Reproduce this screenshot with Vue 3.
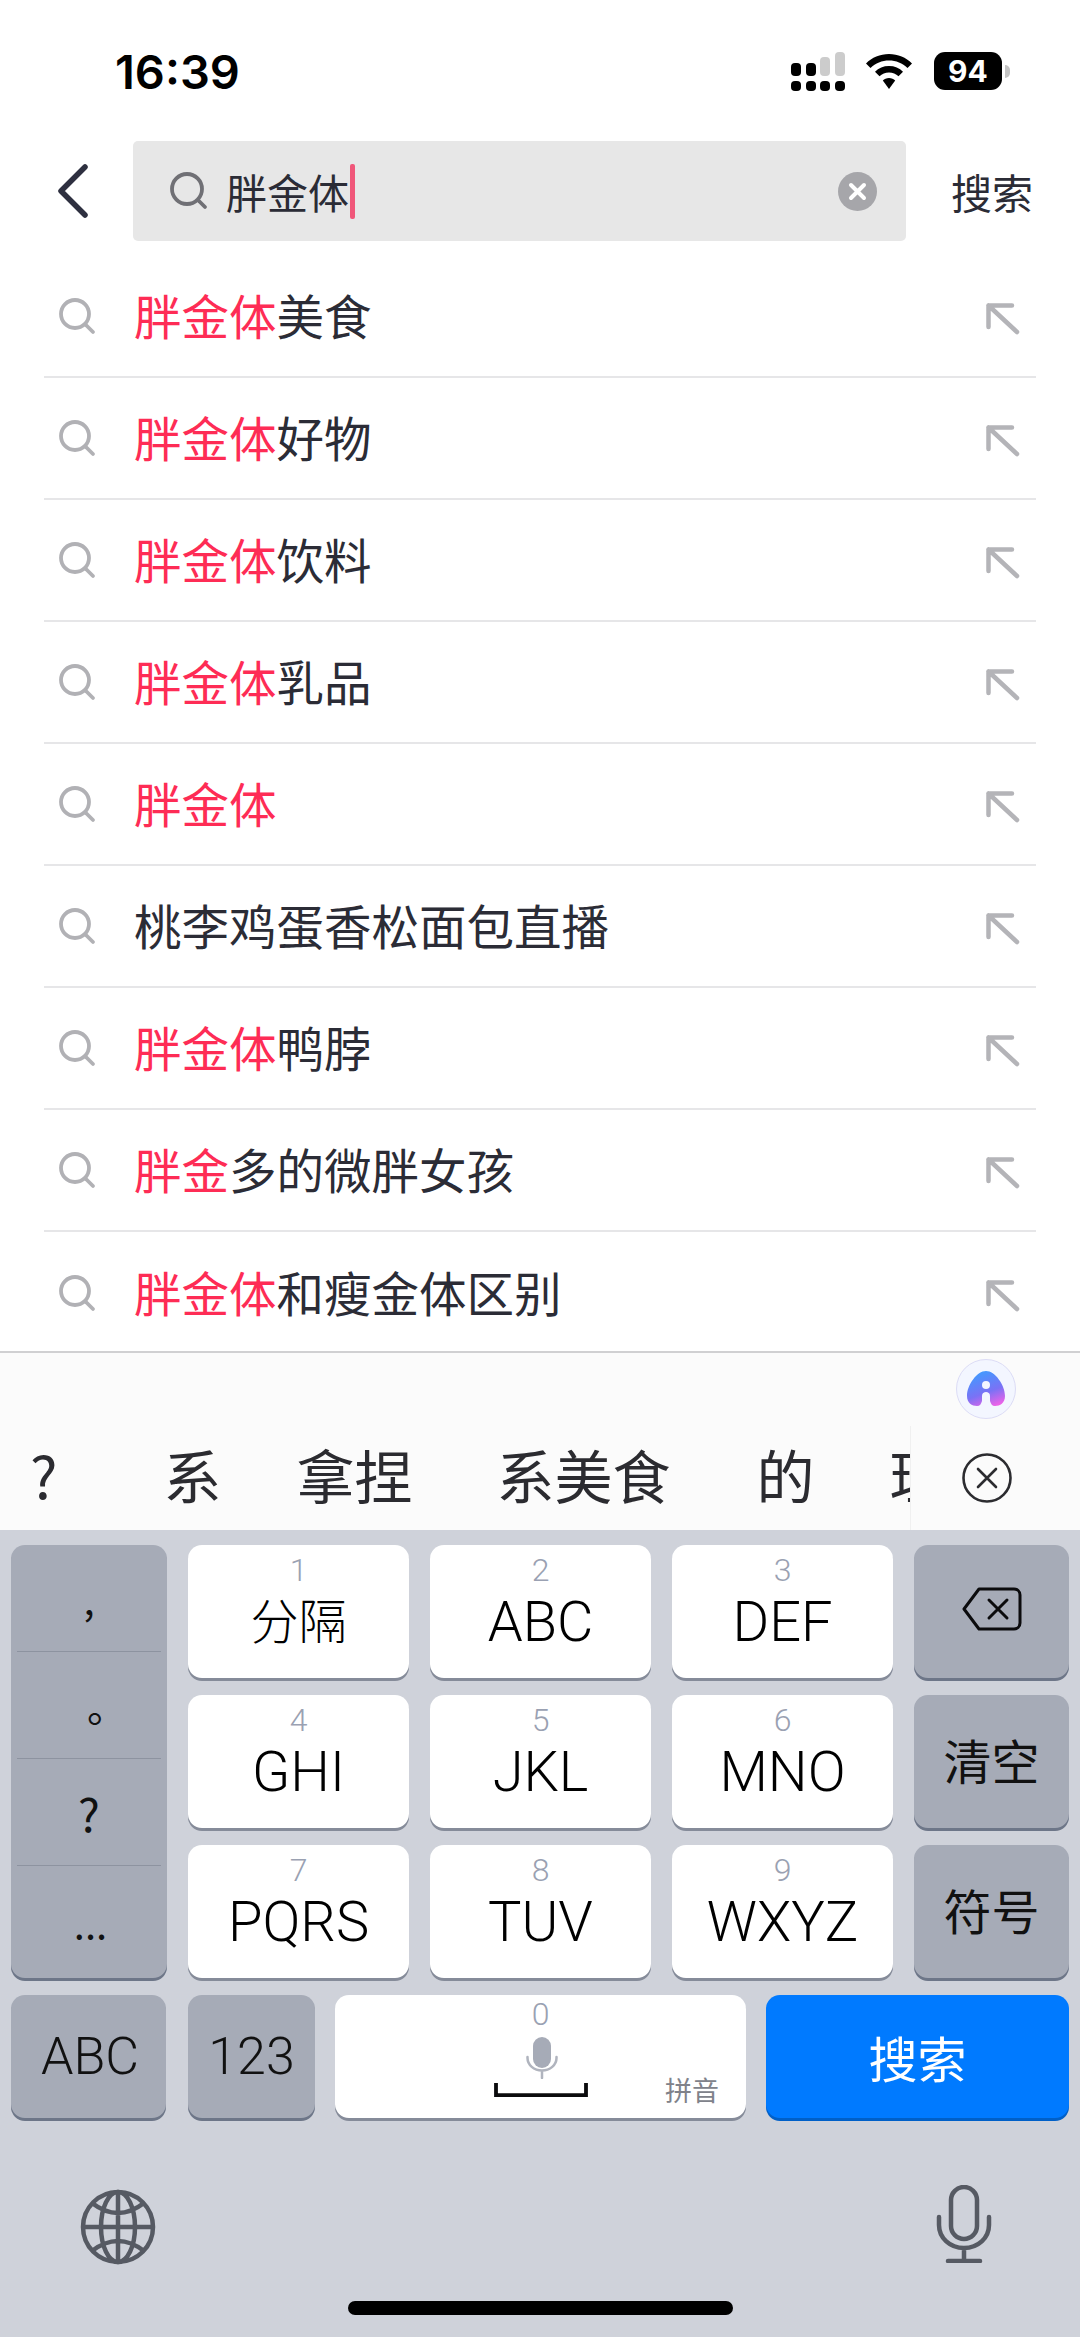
<script setup>
const rows = [
  ['胖金体', '美食'], ['胖金体', '好物'], ['胖金体', '饮料'], ['胖金体', '乳品'], ['胖金体', ''],
  ['', '桃李鸡蛋香松面包直播'], ['胖金体', '鸭脖'], ['胖金', '多的微胖女孩'], ['胖金体', '和瘦金体区别'],
]
const keys = [
  ['1', '分隔'], ['2', 'ABC'], ['3', 'DEF'], ['4', 'GHI'], ['5', 'JKL'], ['6', 'MNO'], ['7', 'PQRS'], ['8', 'TUV'], ['9', 'WXYZ'],
]
const candidates = ['?', '系', '拿捏', '系美食', '的', '理']
</script>

<template>
  <div class="phone">
    <header class="status">
      <span class="time">16:39</span>
      <div class="status-icons">
        <svg class="signal" width="54" height="40" viewBox="0 0 54 40">
          <rect x="0" y="11" width="10" height="13" rx="4" fill="#000" />
          <rect x="15" y="11" width="10" height="13" rx="4" fill="#000" />
          <rect x="29" y="5" width="10" height="19" rx="4" fill="#ccc" />
          <rect x="44" y="0" width="10" height="24" rx="4" fill="#ccc" />
          <rect x="0" y="29" width="10" height="10" rx="4" fill="#000" />
          <rect x="15" y="29" width="10" height="10" rx="4" fill="#000" />
          <rect x="29" y="29" width="10" height="10" rx="4" fill="#000" />
          <rect x="44" y="29" width="10" height="10" rx="4" fill="#000" />
        </svg>
        <svg class="wifi" width="46" height="36" viewBox="0 0 46 36">
          <path d="M23 0C14 0 6 3.500 0 9.500L4.500 14C9.500 9 16 6.500 23 6.500S36.500 9 41.500 14L46 9.500C40 3.500 32 0 23 0Z" fill="#000" />
          <path d="M23 12C17.500 12 12.500 14 9 17.800L13.500 22.300C16 19.800 19.300 18.400 23 18.400S30 19.800 32.500 22.300L37 17.800C33.500 14 28.500 12 23 12Z" fill="#000" />
          <path d="M23 24C20.500 24 18.300 25 16.800 26.600L23 35L29.200 26.600C27.700 25 25.500 24 23 24Z" fill="#000" />
        </svg>
        <div class="battery"><span class="level">94</span><i class="nub"></i></div>
      </div>
    </header>

    <div class="search-row">
      <svg class="back" width="30" height="54" viewBox="0 0 30 54">
        <path d="M27 3L3 27L27 51" fill="none" stroke="#2e3040" stroke-width="5.500" stroke-linecap="round" stroke-linejoin="round" />
      </svg>
      <div class="search-box">
        <svg class="box-icon" width="38" height="38" viewBox="0 0 38 38">
          <circle cx="17" cy="17" r="15" fill="none" stroke="#707075" stroke-width="3.800" />
          <path d="M29 29L35 35" stroke="#707075" stroke-width="3.800" stroke-linecap="round" />
        </svg>
        <span class="query">胖金体</span><i class="caret"></i>
        <svg class="clear" width="39" height="39" viewBox="0 0 39 39">
          <circle cx="19.500" cy="19.500" r="19.500" fill="#a6a6aa" />
          <path d="M13 13L26 26M26 13L13 26" stroke="#fff" stroke-width="4" stroke-linecap="round" />
        </svg>
      </div>
      <span class="search-action">搜索</span>
    </div>

    <ul class="list">
      <li v-for="(r, i) in rows" :key="i" class="row">
        <svg class="row-icon" width="37" height="37" viewBox="0 0 37 37">
          <circle cx="16" cy="16" r="14" fill="none" stroke="#b1b1b5" stroke-width="3.800" />
          <path d="M27 27L34 34" stroke="#b1b1b5" stroke-width="3.800" stroke-linecap="round" />
        </svg>
        <span class="row-text"><em>{{ r[0] }}</em>{{ r[1] }}</span>
        <svg class="row-arrow" width="36" height="36" viewBox="0 0 36 36">
          <path d="M3.500 3.500H27M3.500 3.500V25M3.500 3.500L32 30" fill="none" stroke="#b4b4b8" stroke-width="4.500" stroke-linecap="round" stroke-linejoin="round" />
        </svg>
      </li>
    </ul>

    <section class="candidates">
      <div class="ai-line">
        <div class="ai-badge">
          <svg width="38" height="36" viewBox="0 0 38 36">
            <defs>
              <linearGradient id="aiGrad" x1="0.300" y1="0" x2="0.700" y2="1">
                <stop offset="0" stop-color="#3f9cff" />
                <stop offset="0.600" stop-color="#7a72f5" />
                <stop offset="1" stop-color="#ea62e8" />
              </linearGradient>
            </defs>
            <path d="M19 0C28 0 38 14 38 25C38 32 33 35 28 35C25 35 24 33 23 30V25C23 22 21 21 19 21S15 22 15 25V30C14 33 13 35 10 35C5 35 0 32 0 25C0 14 10 0 19 0Z" fill="url(#aiGrad)" />
            <circle cx="19" cy="14" r="4" fill="#f3f6ff" />
          </svg>
        </div>
      </div>
      <div class="cand-line">
        <div class="cand-words">
          <span v-for="c in candidates" :key="c" class="cand">{{ c }}</span>
        </div>
        <div class="cand-close">
          <svg width="50" height="50" viewBox="0 0 50 50">
            <circle cx="25" cy="25" r="23.500" fill="none" stroke="#2c2c30" stroke-width="2.600" />
            <path d="M16 16L34 34M34 16L16 34" stroke="#2c2c30" stroke-width="2.600" stroke-linecap="round" />
          </svg>
        </div>
      </div>
    </section>

    <section class="keyboard">
      <div class="keygrid">
        <div class="key dark punct">
          <span class="p p1">,</span>
          <span class="p p2">。</span>
          <span class="p p3">?</span>
          <span class="p p4">...</span>
        </div>
        <div v-for="k in keys" :key="k[0]" class="key light" :class="'k' + k[0]">
          <span class="digit">{{ k[0] }}</span>
          <span class="label">{{ k[1] }}</span>
        </div>
        <div class="key dark del">
          <svg width="60" height="44" viewBox="0 0 60 44">
            <path d="M17 2H52C55 2 58 4 58 8V36C58 40 55 42 52 42H17L2 22Z" fill="none" stroke="#0b0b0d" stroke-width="3" stroke-linejoin="round" />
            <path d="M27 13L45 31M45 13L27 31" stroke="#0b0b0d" stroke-width="3" stroke-linecap="round" />
          </svg>
        </div>
        <div class="key dark side clear-key">清空</div>
        <div class="key dark side sym-key">符号</div>
      </div>
      <div class="bottom-row">
        <div class="key dark abc">ABC</div>
        <div class="key dark num">123</div>
        <div class="key light space">
          <span class="digit zero">0</span>
          <svg class="space-mic" width="32" height="42" viewBox="0 0 32 42">
            <rect x="7" y="0" width="18" height="31" rx="9" fill="#a6abb7" />
            <path d="M1.500 20V21C1.500 28 8 33.500 16 33.500S30.500 28 30.500 21V20M16 33.500V41" fill="none" stroke="#b0b4be" stroke-width="2.500" stroke-linecap="round" />
          </svg>
          <svg class="space-bar" width="94" height="14" viewBox="0 0 94 14">
            <path d="M2 0V12.200H92V0" fill="none" stroke="#0b0b0d" stroke-width="3.800" />
          </svg>
          <span class="pinyin">拼音</span>
        </div>
        <div class="key go">搜索</div>
      </div>
      <div class="tools">
        <svg width="76" height="76" viewBox="0 0 76 76" fill="none" stroke="#565a63" stroke-width="4.500">
          <circle cx="38" cy="38" r="35" />
          <ellipse cx="38" cy="38" rx="17" ry="35" />
          <path d="M38 3V73M3 38H73M12 14Q38 34 64 14M12 62Q38 42 64 62" />
        </svg>
        <svg class="tool-mic" width="56" height="78" viewBox="0 0 56 78" fill="none" stroke="#565a63" stroke-width="4.500" stroke-linecap="round">
          <rect x="15" y="2" width="26" height="52" rx="13" />
          <path d="M3 32V40C3 53 14 63 28 63S53 53 53 40V32M28 63V76M12 76H44" />
        </svg>
      </div>
      <div class="home-wrap"><i class="home"></i></div>
    </section>
  </div>
</template>

<style scoped>
.phone {
  width: 1080px;
  height: 2337px;
  background: #fff;
  overflow: hidden;
  display: flex;
  flex-direction: column;
  font-family: "Noto Sans CJK SC", "Noto Sans", sans-serif;
  color: #2b2c36;
}
.status {
  height: 141px;
  padding: 0 78px 0 115px;
  box-sizing: border-box;
  display: flex;
  justify-content: space-between;
  align-items: flex-start;
}
.time {
  font-family: Inter, "Liberation Sans", sans-serif;
  font-weight: 600;
  font-size: 47px;
  line-height: 52px;
  margin-top: 46px;
  color: #000;
}
.status-icons {
  display: flex;
  align-items: flex-start;
  margin-top: 52px;
}
.wifi { margin-left: 21px; margin-top: 2px; }
.battery {
  margin-left: 22px;
  width: 68px;
  height: 38px;
  background: #000;
  border-radius: 11px;
  position: relative;
  display: flex;
  align-items: center;
  justify-content: center;
}
.level {
  font-family: Inter, "Liberation Sans", sans-serif;
  font-weight: 700;
  font-size: 30px;
  line-height: 38px;
  color: #fff;
}
.nub {
  position: absolute;
  right: -8px;
  top: 13px;
  width: 5px;
  height: 13px;
  background: #c4c4c4;
  border-radius: 0 6px 6px 0;
}
.search-row {
  height: 100px;
  display: flex;
  align-items: center;
  padding-left: 58px;
}
.back { flex: none; margin-right: 45px; }
.search-box {
  width: 773px;
  height: 100px;
  background: #e7e7e7;
  border-radius: 5px;
  display: flex;
  align-items: center;
  box-sizing: border-box;
  padding: 0 29px 0 37px;
}
.box-icon { margin-right: 18px; flex: none; }
.query { font-size: 41px; line-height: 56px; }
.caret {
  width: 5px;
  height: 55px;
  margin-left: 1px;
  background: #f0577a;
  border-radius: 2px;
}
.clear { margin-left: auto; }
.search-action {
  margin-left: 45px;
  font-size: 41px;
  line-height: 56px;
}
.list {
  list-style: none;
  margin: 15px 0 0;
  padding: 0 44px;
  height: 1095px;
}
.row {
  height: 122px;
  box-sizing: border-box;
  border-bottom: 2px solid #e6e6e8;
  display: flex;
  align-items: center;
}
.row:last-child { border-bottom: 0; }
.row-icon { margin-left: 15px; flex: none; }
.row-text {
  margin: 0 0 2px 38px;
  font-size: 47.500px;
  line-height: 64px;
}
.row-text em { font-style: normal; color: #fe2c55; }
.row-arrow { margin-left: auto; margin-right: 15px; margin-top: 8px; flex: none; }
.candidates {
  height: 179px;
  background: #fbfbfb;
  border-top: 2px solid #d0d0d2;
  box-sizing: border-box;
}
.ai-line {
  height: 73px;
  display: flex;
  justify-content: flex-end;
  padding: 6px 64px 0 0;
  box-sizing: border-box;
}
.ai-badge {
  width: 60px;
  height: 60px;
  box-sizing: border-box;
  border-radius: 50%;
  background: #f3f6ff;
  border: 1.500px solid #dcdcf6;
  display: flex;
  align-items: center;
  justify-content: center;
}
.cand-line { display: flex; height: 104px; }
.cand-words {
  width: 911px;
  flex: none;
  overflow: hidden;
  display: flex;
  align-items: center;
  padding: 0 0 8px 30px;
  box-sizing: border-box;
  border-right: 1px solid #f0f0f0;
  white-space: nowrap;
  font-size: 58px;
  color: #2b2b30;
}
.cand { flex: none; }
.cand:nth-child(2) { margin-left: 106px; }
.cand:nth-child(3) { margin-left: 75px; }
.cand:nth-child(4) { margin-left: 84px; }
.cand:nth-child(5) { margin-left: 86px; }
.cand:nth-child(6) { margin-left: 75px; }
.cand-close {
  flex: 1;
  display: flex;
  align-items: center;
  justify-content: center;
  padding-right: 18px;
}
.keyboard {
  flex: 1;
  background: #cfd2da;
  padding: 15px 11px 0;
  display: flex;
  flex-direction: column;
}
.keygrid {
  display: grid;
  grid-template-columns: 156px 221px 221px 221px 155px;
  grid-template-rows: 133px 133px 133px;
  column-gap: 21px;
  row-gap: 17px;
}
.key {
  border-radius: 14px;
  box-sizing: border-box;
}
.light {
  background: #fff;
  box-shadow: 0 3px 0 #858b99;
  display: flex;
  flex-direction: column;
  align-items: center;
  padding-top: 9px;
  font-family: Roboto, "Noto Sans CJK SC", sans-serif;
  font-weight: 300;
  color: #000;
}
.dark {
  background: #a6abb7;
  box-shadow: 0 3px 0 #6d7688;
  color: #111;
}
.digit {
  font-size: 32px;
  line-height: 32px;
  color: #9aa1b2;
}
.label {
  font-size: 56px;
  line-height: 73px;
}
.k1 .label { font-size: 48px; }
.punct {
  grid-row: 1 / 4;
  grid-column: 1;
  display: grid;
  grid-template-rows: 107px 107px 107px 1fr;
  font-size: 40px;
  line-height: 40px;
  text-align: center;
}
.p {
  display: flex;
  align-items: center;
  justify-content: center;
  border-bottom: 1px solid #8d93a0;
  margin: 0 6px;
}
.p2 { padding-left: 36px; }
.p3 { font-size: 46px; }
.p4 { border-bottom: 0; padding-left: 3px; }
.k1 { grid-column: 2; grid-row: 1; }
.k2 { grid-column: 3; grid-row: 1; }
.k3 { grid-column: 4; grid-row: 1; }
.k4 { grid-column: 2; grid-row: 2; }
.k5 { grid-column: 3; grid-row: 2; }
.k6 { grid-column: 4; grid-row: 2; }
.k7 { grid-column: 2; grid-row: 3; }
.k8 { grid-column: 3; grid-row: 3; }
.k9 { grid-column: 4; grid-row: 3; }
.del {
  grid-column: 5;
  grid-row: 1;
  display: flex;
  align-items: center;
  justify-content: center;
  padding-bottom: 6px;
}
.side {
  grid-column: 5;
  display: flex;
  align-items: center;
  justify-content: center;
  font-size: 48px;
  padding-bottom: 6px;
}
.clear-key { grid-row: 2; }
.sym-key { grid-row: 3; }
.bottom-row {
  display: flex;
  height: 123px;
  margin-top: 17px;
}
.abc, .num {
  display: flex;
  align-items: center;
  justify-content: center;
  font-family: Roboto, sans-serif;
  font-weight: 300;
  font-size: 52px;
}
.abc { width: 155px; padding-left: 3px; }
.num { width: 127px; margin-left: 22px; }
.space {
  width: 411px;
  margin-left: 20px;
  position: relative;
  padding-top: 4px;
}
.zero { line-height: 30px; }
.space-mic { margin: 8px 0 0 2px; }
.space-bar { margin-top: 4px; }
.pinyin {
  position: absolute;
  right: 27px;
  bottom: 12px;
  font-family: "Noto Sans CJK SC", sans-serif;
  font-weight: 400;
  font-size: 27px;
  line-height: 32px;
  color: #80828a;
}
.go {
  width: 303px;
  margin-left: 20px;
  background: #007aff;
  box-shadow: 0 3px 0 #0060c8;
  color: #fff;
  font-size: 49px;
  display: flex;
  align-items: center;
  justify-content: center;
}
.tools {
  display: flex;
  justify-content: space-between;
  align-items: center;
  height: 78px;
  margin-top: 70px;
  padding: 0 77px 0 69px;
}
.tool-mic { margin-top: -6px; }
.home-wrap {
  display: flex;
  justify-content: center;
  margin-top: 35px;
}
.home {
  width: 385px;
  height: 14px;
  background: #000;
  border-radius: 7px;
}
</style>
